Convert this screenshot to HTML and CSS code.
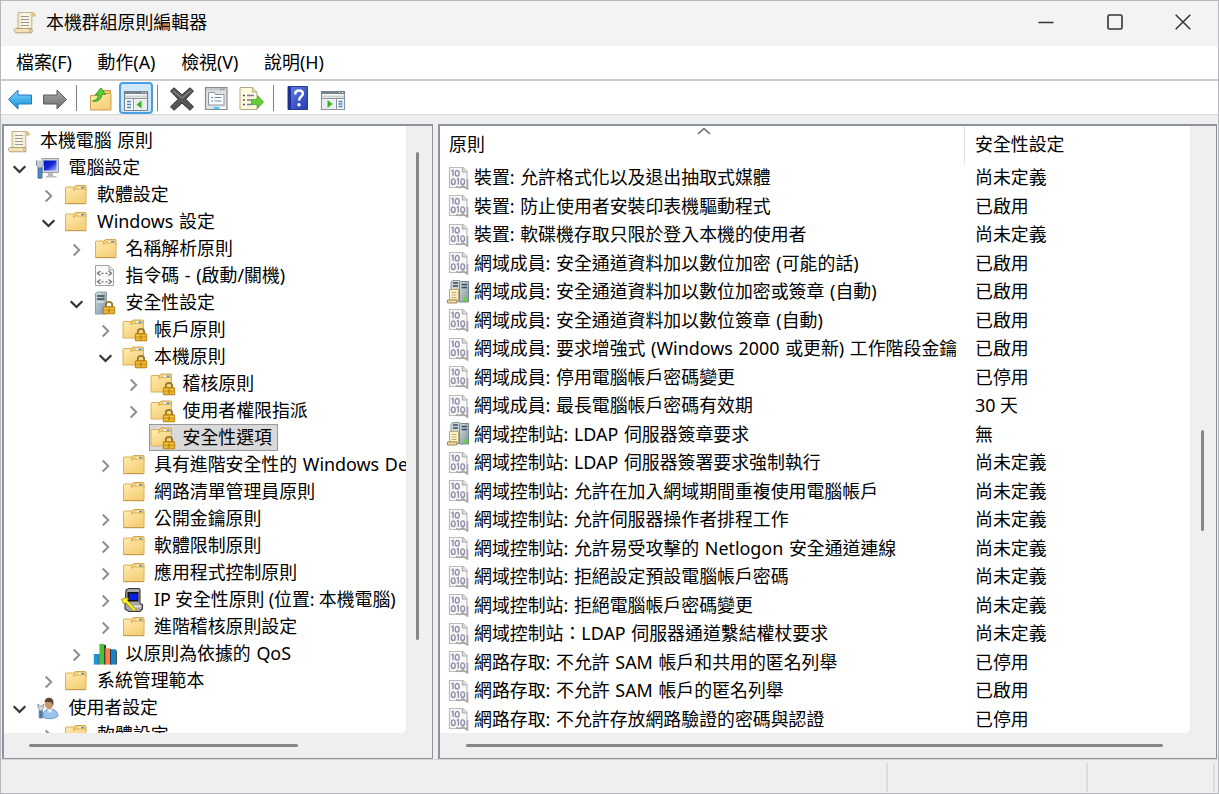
FILE: index.html
```html
<!DOCTYPE html>
<html lang="zh-Hant">
<head>
    <meta charset="UTF-8">
    <meta name="viewport" content="width=device-width, initial-scale=1.0">
    <title>本機群組原則編輯器</title>
    <link rel="stylesheet" href="styles.css">
</head>
<body>
    <!-- Shared icons -->
    <svg class="icon-defs" aria-hidden="true">
        <defs>
            <linearGradient id="gFolder" x1="0" y1="0" x2="0.6" y2="1">
                <stop offset="0" stop-color="#ffebae"/>
                <stop offset="1" stop-color="#f6cf78"/>
            </linearGradient>
            <linearGradient id="gPaper" x1="0" y1="0" x2="1" y2="0">
                <stop offset="0" stop-color="#efe2bd"/>
                <stop offset="0.4" stop-color="#fffbef"/>
                <stop offset="1" stop-color="#f1e3b8"/>
            </linearGradient>
            <linearGradient id="gBlue" x1="0" y1="0" x2="0" y2="1">
                <stop offset="0" stop-color="#7fd4fa"/>
                <stop offset="1" stop-color="#128fe0"/>
            </linearGradient>
            <linearGradient id="gGray" x1="0" y1="0" x2="0" y2="1">
                <stop offset="0" stop-color="#a9a9a9"/>
                <stop offset="1" stop-color="#6c6c6c"/>
            </linearGradient>
            <linearGradient id="gHelp" x1="0" y1="0" x2="1" y2="1">
                <stop offset="0" stop-color="#6482e6"/>
                <stop offset="1" stop-color="#2438b0"/>
            </linearGradient>
            <linearGradient id="gScreen" x1="0" y1="0" x2="1" y2="1">
                <stop offset="0" stop-color="#0018b8"/>
                <stop offset="0.5" stop-color="#1426d8"/>
                <stop offset="1" stop-color="#a8b8ff"/>
            </linearGradient>
            <linearGradient id="gServer" x1="0" y1="0" x2="1" y2="1">
                <stop offset="0" stop-color="#d3dfe4"/>
                <stop offset="1" stop-color="#7d929e"/>
            </linearGradient>
        </defs>
        <symbol id="scroll" viewBox="0 0 24 24">
            <path d="M6 2.500h14c2.600 0 3.400 1.500 3.200 3.600h-3.400V19H6z" fill="url(#gPaper)" stroke="#c4b58e"/>
            <path d="M20 2.600c-1.400 1-1 2.400-.4 3.500h3.600C23.400 4 22.500 2.500 20 2.600z" fill="#d9c48c"/>
            <path d="M3.800 18.500h14.400c-.8 1.800-.2 3.800 1.200 4.300H4.200c-2.400-.4-2.400-3.900-.4-4.300z" fill="#f3e2b0" stroke="#b3a27a"/>
            <path d="M18.200 18.500c2-.4 2.800 3 1 4.300" fill="none" stroke="#a8956a"/>
            <path d="M9 6.500h8M9 9.500h8M9 12.500h8M9 15.500h8" stroke="#9a9a9a" stroke-width="1.200"/>
        </symbol>
        <symbol id="folder" viewBox="0 0 24 24">
            <path d="M10.500 4.500l2-2h9.500c.6 0 1 .4 1 1V8H10.500z" fill="#f3ce7c" stroke="#d3a750"/>
            <path d="M15.500 4h5.500v1.600h-5.500z" fill="#fff"/>
            <path d="M18 4h3v1.600h-3z" fill="#3e94dc"/>
            <path d="M2.500 5c0-.6.4-1 1-1h7v3.500l2-1.500h9.500c.6 0 1 .4 1 1v13.500H2.500z" fill="url(#gFolder)" stroke="#dbb159"/>
            <path d="M2.500 20.700H23" stroke="#bf9848"/>
        </symbol>
        <symbol id="lock" viewBox="0 0 13 14">
            <path d="M3.300 7V4.500a3.200 3.200 0 0 1 6.400 0V7" fill="none" stroke="#94762e" stroke-width="1.800"/>
            <rect x=".7" y="6.200" width="11.600" height="7.300" rx="1" fill="#e0a51e" stroke="#b17c10"/>
            <path d="M1.500 8h10M1.500 11.500h10" stroke="#f2c64c"/>
            <path d="M6.500 8v4" stroke="#c18a14" stroke-width="2"/>
        </symbol>
        <symbol id="folder-lock" viewBox="0 0 26 24">
            <g transform="translate(-1.500 -.5)">
                <path d="M10.500 4.500l2-2h9.500c.6 0 1 .4 1 1V8H10.500z" fill="#f3ce7c" stroke="#d3a750"/>
                <path d="M15.500 4h5.500v1.600h-5.500z" fill="#fff"/>
                <path d="M18 4h3v1.600h-3z" fill="#3e94dc"/>
                <path d="M2.500 5c0-.6.4-1 1-1h7v3.500l2-1.500h9.500c.6 0 1 .4 1 1v13.500H2.500z" fill="url(#gFolder)" stroke="#dbb159"/>
            </g>
            <use href="#lock" x="12.500" y="9.500" width="13" height="14"/>
        </symbol>
        <symbol id="server-lock" viewBox="0 0 24 24">
            <path d="M2.500 2.500l2-1.500h9l-.5 22H2.500z" fill="url(#gServer)" stroke="#8d9ca5"/>
            <path d="M4 5h7.500M4 8h7.500" stroke="#33454f" stroke-width="1.500"/>
            <path d="M4 11h7.500" stroke="#eef4f7"/>
            <use href="#lock" x="9.500" y="9.500" width="13" height="14"/>
        </symbol>
        <symbol id="computer" viewBox="0 0 24 24">
            <path d="M7 2.500h16.500v14H7z" fill="#d3d7da" stroke="#999fa4"/>
            <path d="M9 4.500h12.500v10H9z" fill="url(#gScreen)"/>
            <path d="M13 17h5v3h3.500v1.500H11V20h2z" fill="#b9bdc0"/>
            <path d="M1.500 4.500v4.500c0 1 1 1.500 1.700 2V22h3.600V11c1-.5 1.700-1 1.700-2V4.500" fill="#c0ccd4" stroke="#7f909b"/>
            <path d="M3.200 12h3.600v10H3.200z" fill="#4f8fc8" stroke="#2e6394" stroke-width=".8"/>
        </symbol>
        <symbol id="user" viewBox="0 0 24 24">
            <path d="M8 21c-.3-4.600 2.500-8 7-8s8 3 8 7c-3 3.300-12 3.500-15 1z" fill="#9cc4ea" stroke="#6a98c6"/>
            <path d="M12 13.500l3 3.500 2.500-3.500z" fill="#fff"/>
            <ellipse cx="14" cy="7.800" rx="4.300" ry="5.300" fill="#c99a72"/>
            <path d="M9.600 6C10 2.500 12 1.500 14.500 1.800c3.500.4 4.700 3.500 3.500 8l-1.600-3.600z" fill="#5d4536"/>
            <path d="M3 8v3.500c0 1 .6 1.300 1.200 1.800V22h3.200v-8.700c.8-.5 1.200-.8 1.200-1.800V8L7 10H4.700z" fill="#d1d9df" stroke="#84939e" stroke-width=".9"/>
            <path d="M4.200 14.500h3.200V22H4.200z" fill="#3f7cb6"/>
        </symbol>
        <symbol id="script" viewBox="0 0 24 24">
            <path d="M2.500 1.500H16l4.500 4.500v15.500h-18z" fill="#fafafa" stroke="#a3a3a3"/>
            <path d="M16 1.500V6h4.500" fill="#e4e4e4" stroke="#a3a3a3"/>
            <path d="M7.500 7L4.500 9.300l3 2.200M15.500 7l3 2.300-3 2.200M8.500 9.300h2M12.500 9.300h2M7.500 15.500l-3 2.300 3 2.200M15.500 15.500l3 2.300-3 2.200M8.500 17.800h2M12.500 17.800h2" fill="none" stroke="#6d6d7c" stroke-width="1.300"/>
        </symbol>
        <symbol id="ipsec" viewBox="0 0 24 24">
            <path d="M5 2l3-1.500h10l1 1.500v13.500l2.500 1v4.500L19 23.500H8L4 21v-4z" fill="#a9a9ad" stroke="#333" stroke-width="1.100"/>
            <path d="M6.500 4h11v9.500h-11z" fill="#111"/>
            <path d="M8 5.500h8.500V12H8z" fill="#0a1ee6"/>
            <path d="M10 18.500h10" stroke="#eee" stroke-width="1.500"/>
            <path d="M.5 11.500L5 9.500l2.500 1-1 2 3 3 5.500 6-2 2-8-8.500-2.500.5z" fill="#fff01a" stroke="#857700" stroke-width=".7"/>
        </symbol>
        <symbol id="qos" viewBox="0 0 25 24">
            <path d="M5.500 12.500l1.500-1V23H5.500zM11.500 2l2 1V23h-2zM17.500 6.500l2 1V23h-2zM23.300 7.500l1.500 1V23h-1.500z" fill="#1c2a22"/>
            <path d="M.8 12h5V23h-5z" fill="#1e93d8"/>
            <path d="M6.700 1.500h5V23h-5z" fill="#4fbd3e"/>
            <path d="M12.800 6h5v17h-5z" fill="#ff7a4d"/>
            <path d="M18.600 7h5v16h-5z" fill="#1583cf"/>
        </symbol>
        <symbol id="policy" viewBox="0 0 22 24">
            <path d="M1.500 1.500h13.500l4 4v16h-17.500z" fill="#f8f8f8" stroke="#bcbcbc" stroke-width="1.200"/>
            <path d="M14.500 1.500v4.500H19" fill="#e6e6e6" stroke="#a8a8a8" stroke-width="1.200"/>
            <g fill="none" stroke="#9290aa" stroke-width="1.400">
                <path d="M3.500 5l1.500-.7v6"/>
                <ellipse cx="9.200" cy="7.300" rx="2" ry="2.800"/>
                <ellipse cx="5.300" cy="15.700" rx="1.900" ry="2.800"/>
                <path d="M8.800 13.400l1.500-.7v6"/>
                <ellipse cx="14.700" cy="15.700" rx="1.900" ry="2.800"/>
            </g>
            <path d="M8 20.500c2.500 1.500 5 1 7-.5l4.500 3V13" fill="none" stroke="#a5a5a5" stroke-width="1.600"/>
        </symbol>
        <symbol id="policy-set" viewBox="0 0 24 24">
            <path d="M4 2l1.500-1.500H13v21H4z" fill="#c8d4d8" stroke="#8b9aa0"/>
            <path d="M12.500 3L14 1.500h7.500V22h-9z" fill="url(#gServer)" stroke="#74868e"/>
            <path d="M6 3h5M6 6h5M14.500 4.500H20M14.500 7.500H20" stroke="#3c4b52" stroke-width="1.300"/>
            <path d="M2.500 9.500h9V20h-9z" fill="#fff3c8" stroke="#bba76f"/>
            <path d="M.5 20h9.500v3H.5z" fill="#efdca0" stroke="#a18c56"/>
            <path d="M4.500 12.500h5M4.500 15h5M4.500 17.500h5" stroke="#b5a983"/>
            <path d="M17.500 17.500H21v4h-3.500z" fill="#5fdc1e"/>
        </symbol>
        <symbol id="chev-right" viewBox="0 0 16 16">
            <path d="M4.700 2.500l5.500 5.500-5.500 5.500" fill="none" stroke="#8f8f8f" stroke-width="2"/>
        </symbol>
        <symbol id="chev-down" viewBox="0 0 16 16">
            <path d="M1.700 5.200L7.500 11l5.800-5.800" fill="none" stroke="#333" stroke-width="2.200"/>
        </symbol>
    </svg>

    <div class="window">
        <header class="titlebar">
            <svg class="title-icon"><use href="#scroll"/></svg>
            <h1>本機群組原則編輯器</h1>
            <div class="controls">
                <svg viewBox="0 0 16 16"><path d="M0.500 8.500h15" stroke="#333" stroke-width="1.500"/></svg>
                <svg viewBox="0 0 16 16"><rect x="1" y="1" width="14" height="14" rx="1.500" fill="none" stroke="#333" stroke-width="1.600"/></svg>
                <svg viewBox="0 0 16 16"><path d="M.7.700l14.600 14.600M15.300.700L.7 15.300" stroke="#333" stroke-width="1.500"/></svg>
            </div>
        </header>

        <nav class="menubar">
            <span>檔案(F)</span>
            <span>動作(A)</span>
            <span>檢視(V)</span>
            <span>說明(H)</span>
        </nav>

        <div class="toolbar">
            <button title="上一頁"><svg viewBox="0 0 26 26"><path d="M1.500 13.500L11 4v5h13.500v9H11v5z" fill="url(#gBlue)" stroke="#2878b8" stroke-linejoin="round"/></svg></button>
            <button title="下一頁"><svg viewBox="0 0 26 26"><path d="M24.500 13.500L15 4v5H1.500v9H15v5z" fill="url(#gGray)" stroke="#5d5d5d" stroke-linejoin="round"/></svg></button>
            <i class="sep"></i>
            <button title="上移一層"><svg viewBox="0 0 26 26">
                <path d="M13 7l2-2.500h7.500V10H13z" fill="#f0c870" stroke="#c89b45"/>
                <path d="M2.500 9.500h10l2-2h8.500v16.500H2.500z" fill="url(#gFolder)" stroke="#c99e4a"/>
                <path d="M4.500 15c4-.5 5.500-3 6-6.500L7 9l6-7 4.500 6.500-3.500-.4c-.5 5-4 8.400-9.500 6.900z" fill="#5ccf35" stroke="#2f9a1c" stroke-width=".9"/>
            </svg></button>
            <button class="active" title="顯示樹狀目錄"><svg viewBox="0 0 26 26">
                <path d="M1.500 5.500h23v19h-23z" fill="#f7f9fa" stroke="#7a858d" stroke-width="1.200"/>
                <path d="M1 5h24v3H1z" fill="#76838c"/>
                <path d="M2 9.500h22v2H2z" fill="#c9d0d4"/>
                <path d="M2 12.500h22M10.500 12.500V24" stroke="#8a959c"/>
                <path d="M4 15.500h4M4 18.500h4M4 21.500h4" stroke="#4b82bd" stroke-width="1.400"/>
                <path d="M12 13.500h11V24H12z" fill="#e9edf0"/>
                <path d="M18.500 14.500v8L13.500 18.500z" fill="#39b51f"/>
                <path d="M19 6.500h1M22 6.500h1" stroke="#fff"/>
            </svg></button>
            <i class="sep"></i>
            <button title="刪除"><svg viewBox="0 0 26 26"><path d="M1.500 5L5 1.800l8 7 8-7L24.500 5l-7.700 8.200 7.700 7.600-3.500 3.500-8-7.200-8 7.200-3.500-3.500 7.700-7.600z" fill="#565656" stroke="#333"/><path d="M4 4.800l9 7.200 9-7.200" fill="none" stroke="#888" stroke-width="1.200"/></svg></button>
            <button title="內容"><svg viewBox="0 0 26 26">
                <path d="M1.500 1.500h21.500v22H1.500z" fill="#dfe2e5" stroke="#858b92" stroke-width="1.200"/>
                <path d="M2 2h20.500v2.500H2z" fill="#c5c9ce"/>
                <path d="M16 3.300h1.500M19 3.300h1.500" stroke="#666"/>
                <path d="M4.500 6.500h6l1 2h8.500V19H4.500z" fill="#fff" stroke="#8d949d"/>
                <path d="M7 11.500h2M7 15h2M10.500 11.500h7M10.500 15h7" stroke="#6b8bb4"/>
                <path d="M10 21h5v2h-5z" fill="#45c9f5"/>
                <path d="M16.500 21h5v2h-5z" fill="#fff"/>
            </svg></button>
            <button title="匯出清單"><svg viewBox="0 0 26 26">
                <path d="M1 1.500h12.500L18 6v17.500H1z" fill="#fff8dc" stroke="#b5aa84"/>
                <path d="M13.500 1.500V6H18" fill="#eadfb6" stroke="#b5aa84"/>
                <path d="M4 9.500h2M4 14h2M4 18.500h2" stroke="#555" stroke-width="1.600"/>
                <path d="M8 9.500h7M8 14h5M8 18.500h5" stroke="#7b74a0" stroke-width="1.300"/>
                <path d="M12.500 13.500h6v-4l6 6.500-6 6.500v-4h-6z" fill="#63cf35" stroke="#4ba82e" stroke-width=".8"/>
            </svg></button>
            <i class="sep"></i>
            <button title="說明"><svg viewBox="0 0 26 26">
                <path d="M3 .5h19.500v23H3z" fill="url(#gHelp)" stroke="#2a3a98"/>
                <path d="M3 1h3v22H3z" fill="#1e2f94"/>
                <path d="M10.200 8.500c0-5.500 8-5 7.600-.7-.3 3-3.800 3-3.800 6.700" fill="none" stroke="#fff" stroke-width="2.500"/>
                <circle cx="14" cy="18.700" r="1.700" fill="#fff"/>
            </svg></button>
            <button title="顯示動作窗格"><svg viewBox="0 0 26 26">
                <path d="M1.500 5.500h23v18h-23z" fill="#f7f9fa" stroke="#8a949b" stroke-width="1.200"/>
                <path d="M1 5h24v3H1z" fill="#76838c"/>
                <path d="M2 9.500h22v2H2z" fill="#c9d0d4"/>
                <path d="M2 12.500h22M16.500 12.500V23" stroke="#8a959c"/>
                <path d="M18.500 15.500h4M18.500 18h4M18.500 20.500h4" stroke="#4b82bd" stroke-width="1.400"/>
                <path d="M3 13.500h12V23H3z" fill="#e9edf0"/>
                <path d="M7.500 14v8l5-4z" fill="#39b51f"/>
                <path d="M19 6.500h1M22 6.500h1" stroke="#fff"/>
            </svg></button>
        </div>

        <main class="panes">
            <section class="pane tree-pane">
                <ul class="tree">
                    <li class="root"><div class="node"><svg><use href="#scroll"/></svg>本機電腦 原則</div></li>
                    <li class="l1"><svg class="chev"><use href="#chev-down"/></svg><div class="node"><svg><use href="#computer"/></svg>電腦設定</div></li>
                    <li class="l2"><svg class="chev"><use href="#chev-right"/></svg><div class="node"><svg><use href="#folder"/></svg>軟體設定</div></li>
                    <li class="l2"><svg class="chev"><use href="#chev-down"/></svg><div class="node"><svg><use href="#folder"/></svg>Windows 設定</div></li>
                    <li class="l3"><svg class="chev"><use href="#chev-right"/></svg><div class="node"><svg><use href="#folder"/></svg>名稱解析原則</div></li>
                    <li class="l3"><svg class="chev"></svg><div class="node"><svg><use href="#script"/></svg>指令碼 - (啟動/關機)</div></li>
                    <li class="l3"><svg class="chev"><use href="#chev-down"/></svg><div class="node"><svg><use href="#server-lock"/></svg>安全性設定</div></li>
                    <li class="l4"><svg class="chev"><use href="#chev-right"/></svg><div class="node"><svg class="wide"><use href="#folder-lock"/></svg>帳戶原則</div></li>
                    <li class="l4"><svg class="chev"><use href="#chev-down"/></svg><div class="node"><svg class="wide"><use href="#folder-lock"/></svg>本機原則</div></li>
                    <li class="l5"><svg class="chev"><use href="#chev-right"/></svg><div class="node"><svg class="wide"><use href="#folder-lock"/></svg>稽核原則</div></li>
                    <li class="l5"><svg class="chev"><use href="#chev-right"/></svg><div class="node"><svg class="wide"><use href="#folder-lock"/></svg>使用者權限指派</div></li>
                    <li class="l5"><svg class="chev"></svg><div class="node selected"><svg class="wide"><use href="#folder-lock"/></svg>安全性選項</div></li>
                    <li class="l4"><svg class="chev"><use href="#chev-right"/></svg><div class="node"><svg><use href="#folder"/></svg>具有進階安全性的 Windows De</div></li>
                    <li class="l4"><svg class="chev"></svg><div class="node"><svg><use href="#folder"/></svg>網路清單管理員原則</div></li>
                    <li class="l4"><svg class="chev"><use href="#chev-right"/></svg><div class="node"><svg><use href="#folder"/></svg>公開金鑰原則</div></li>
                    <li class="l4"><svg class="chev"><use href="#chev-right"/></svg><div class="node"><svg><use href="#folder"/></svg>軟體限制原則</div></li>
                    <li class="l4"><svg class="chev"><use href="#chev-right"/></svg><div class="node"><svg><use href="#folder"/></svg>應用程式控制原則</div></li>
                    <li class="l4"><svg class="chev"><use href="#chev-right"/></svg><div class="node tight"><svg><use href="#ipsec"/></svg>IP 安全性原則 (位置: 本機電腦)</div></li>
                    <li class="l4"><svg class="chev"><use href="#chev-right"/></svg><div class="node"><svg><use href="#folder"/></svg>進階稽核原則設定</div></li>
                    <li class="l3"><svg class="chev"><use href="#chev-right"/></svg><div class="node"><svg><use href="#qos"/></svg>以原則為依據的 QoS</div></li>
                    <li class="l2"><svg class="chev"><use href="#chev-right"/></svg><div class="node"><svg><use href="#folder"/></svg>系統管理範本</div></li>
                    <li class="l1"><svg class="chev"><use href="#chev-down"/></svg><div class="node"><svg><use href="#user"/></svg>使用者設定</div></li>
                    <li class="l2"><svg class="chev"><use href="#chev-right"/></svg><div class="node"><svg><use href="#folder"/></svg>軟體設定</div></li>
                </ul>
                <div class="vscroll"><i></i></div>
                <div class="hscroll"><i></i></div>
            </section>

            <section class="pane list-pane">
                <div class="list">
                    <div class="list-head">
                        <div class="name">原則<svg class="sort" viewBox="0 0 14 8"><path d="M1 7l6-5.500L13 7" fill="none" stroke="#666" stroke-width="1.500"/></svg></div>
                        <div class="value">安全性設定</div>
                    </div>
                    <ul class="rows">
                        <li><svg><use href="#policy"/></svg><span class="name">裝置: 允許格式化以及退出抽取式媒體</span><span class="value">尚未定義</span></li>
                        <li><svg><use href="#policy"/></svg><span class="name">裝置: 防止使用者安裝印表機驅動程式</span><span class="value">已啟用</span></li>
                        <li><svg><use href="#policy"/></svg><span class="name">裝置: 軟碟機存取只限於登入本機的使用者</span><span class="value">尚未定義</span></li>
                        <li><svg><use href="#policy"/></svg><span class="name">網域成員: 安全通道資料加以數位加密 (可能的話)</span><span class="value">已啟用</span></li>
                        <li><svg><use href="#policy-set"/></svg><span class="name">網域成員: 安全通道資料加以數位加密或簽章 (自動)</span><span class="value">已啟用</span></li>
                        <li><svg><use href="#policy"/></svg><span class="name">網域成員: 安全通道資料加以數位簽章 (自動)</span><span class="value">已啟用</span></li>
                        <li><svg><use href="#policy"/></svg><span class="name">網域成員: 要求增強式 (Windows 2000 或更新) 工作階段金鑰</span><span class="value">已啟用</span></li>
                        <li><svg><use href="#policy"/></svg><span class="name">網域成員: 停用電腦帳戶密碼變更</span><span class="value">已停用</span></li>
                        <li><svg><use href="#policy"/></svg><span class="name">網域成員: 最長電腦帳戶密碼有效期</span><span class="value">30 天</span></li>
                        <li><svg><use href="#policy-set"/></svg><span class="name">網域控制站: LDAP 伺服器簽章要求</span><span class="value">無</span></li>
                        <li><svg><use href="#policy"/></svg><span class="name">網域控制站: LDAP 伺服器簽署要求強制執行</span><span class="value">尚未定義</span></li>
                        <li><svg><use href="#policy"/></svg><span class="name">網域控制站: 允許在加入網域期間重複使用電腦帳戶</span><span class="value">尚未定義</span></li>
                        <li><svg><use href="#policy"/></svg><span class="name">網域控制站: 允許伺服器操作者排程工作</span><span class="value">尚未定義</span></li>
                        <li><svg><use href="#policy"/></svg><span class="name">網域控制站: 允許易受攻擊的 Netlogon 安全通道連線</span><span class="value">尚未定義</span></li>
                        <li><svg><use href="#policy"/></svg><span class="name">網域控制站: 拒絕設定預設電腦帳戶密碼</span><span class="value">尚未定義</span></li>
                        <li><svg><use href="#policy"/></svg><span class="name">網域控制站: 拒絕電腦帳戶密碼變更</span><span class="value">尚未定義</span></li>
                        <li><svg><use href="#policy"/></svg><span class="name">網域控制站：LDAP 伺服器通道繫結權杖要求</span><span class="value">尚未定義</span></li>
                        <li><svg><use href="#policy"/></svg><span class="name">網路存取: 不允許 SAM 帳戶和共用的匿名列舉</span><span class="value">已停用</span></li>
                        <li><svg><use href="#policy"/></svg><span class="name">網路存取: 不允許 SAM 帳戶的匿名列舉</span><span class="value">已啟用</span></li>
                        <li><svg><use href="#policy"/></svg><span class="name">網路存取: 不允許存放網路驗證的密碼與認證</span><span class="value">已停用</span></li>
                    </ul>
                </div>
                <div class="vscroll"><i></i></div>
                <div class="hscroll"><i></i></div>
            </section>
        </main>

        <footer class="statusbar">
            <div></div>
            <div></div>
            <div></div>
        </footer>
    </div>
</body>
</html>
```

FILE: styles.css
```css
:root {
    --face: #efefef;
    --pane-border: #8f949c;
    --thumb: #868686;
    --text: #000;
}

* {
    box-sizing: border-box;
}

body {
    margin: 0;
    font-family: "Noto Sans", "Noto Sans CJK TC", sans-serif;
    font-size: 17.9px;
    line-height: 27px;
    color: var(--text);
    overflow: hidden;
}

ul {
    list-style: none;
    margin: 0;
    padding: 0;
}

svg {
    display: block;
    flex: none;
}

.icon-defs {
    position: absolute;
    width: 0;
    height: 0;
}

.window {
    width: 1219px;
    height: 794px;
    display: flex;
    flex-direction: column;
    background: var(--face);
    border: 1px solid #b4b8bc;
}

/* Title bar */
.titlebar {
    height: 45px;
    display: flex;
    align-items: center;
    padding: 0 27px 3px 11px;
    background: #f3f3f3;
}

.title-icon {
    width: 24px;
    height: 24px;
}

h1 {
    margin: 0 0 0 10px;
    font-size: 17.9px;
    font-weight: 400;
}

.controls {
    display: flex;
    gap: 52.5px;
    margin-left: auto;
}

.controls svg {
    width: 16px;
    height: 16px;
}

/* Menu */
.menubar {
    height: 33px;
    display: flex;
    align-items: center;
    gap: 25.7px;
    padding-left: 15px;
    background: #fff;
}

/* Toolbar */
.toolbar {
    height: 36px;
    display: flex;
    align-items: center;
    gap: 1px;
    padding-left: 2px;
    background: #fff;
    border-top: 2px solid #c9cacc;
    border-bottom: 1px solid #d9d9d9;
}

.toolbar button {
    width: 34px;
    height: 32px;
    padding: 2px 0 0;
    display: flex;
    align-items: center;
    justify-content: center;
    background: none;
    border: 2px solid transparent;
    border-radius: 4px;
}

.toolbar button.active {
    background: #cfe8fc;
    border-color: #4a9fe0;
}

.toolbar svg {
    width: 26px;
    height: 26px;
}

.sep {
    width: 1px;
    height: 26px;
    margin: 1px 6px 0 3px;
    background: #808080;
}

/* Panes */
.panes {
    height: 635px;
    margin-top: 9px;
    padding-left: 1px;
    display: flex;
    gap: 5px;
}

.pane {
    display: grid;
    grid-template-rows: 607px 1fr;
    border: 2px solid var(--pane-border);
    border-width: 2px 1px 1px 2px;
}

.tree-pane {
    width: 431px;
    grid-template-columns: 402px 1fr;
}

.list-pane {
    width: 779px;
    grid-template-columns: 750px 1fr;
}

.tree,
.list {
    overflow: hidden;
    background: #fff;
    border-bottom-right-radius: 5px;
}

.tree {
    padding-top: 1px;
}

.vscroll i,
.hscroll i {
    display: block;
    background: var(--thumb);
    border-radius: 2px;
}

.vscroll i {
    width: 3px;
}

.hscroll {
    grid-column: 1 / -1;
}

.hscroll i {
    height: 3px;
}

.tree-pane .vscroll i {
    height: 488px;
    margin: 26px 0 0 10px;
}

.tree-pane .hscroll i {
    width: 269px;
    margin: 11px 0 0 25px;
}

.list-pane .vscroll i {
    height: 101px;
    margin: 304px 0 0 11px;
}

.list-pane .hscroll i {
    width: 697px;
    margin: 11px 0 0 26px;
}

/* Tree */
.tree li {
    height: 27px;
    display: flex;
    align-items: center;
    white-space: nowrap;
}

.tree .root,
.tree .l1 { padding-left: 2px; }
.tree .l2 { padding-left: 30.5px; }
.tree .l3 { padding-left: 59px; }
.tree .l4 { padding-left: 87.5px; }
.tree .l5 { padding-left: 116px; }

.chev {
    width: 16px;
    height: 16px;
    margin: 2px 6.5px 0 6px;
}

.node {
    height: 27px;
    display: flex;
    align-items: center;
    padding-right: 6px;
    word-spacing: 1px;
}

.node.tight {
    word-spacing: -0.5px;
}

.node svg {
    width: 24px;
    height: 24px;
    margin-right: 10px;
}

.l3 .node svg,
.l4 .node svg {
    margin: 0 9px 0 1px;
}

.node svg.wide {
    width: 26px;
    margin: 1px 6.5px 0 1.5px;
}

.node.selected {
    background: #d9d9d9;
    box-shadow: inset 0 0 0 1px #999;
}

/* Policy list */
.list-head {
    height: 37.5px;
    display: flex;
    line-height: 36px;
}

.list-head .name {
    position: relative;
    width: 525px;
    padding-left: 9px;
    border-right: 1px solid #e3e3e3;
}

.list-head .value {
    padding-left: 10px;
}

.sort {
    position: absolute;
    top: 1px;
    left: 257px;
    width: 14px;
    height: 8px;
}

.rows li {
    height: 28.5px;
    display: flex;
    align-items: center;
    padding-left: 7px;
    white-space: nowrap;
}

.rows svg {
    width: 24px;
    height: 24px;
    margin-right: 3px;
}

.rows .name {
    width: 501px;
    word-spacing: 1px;
}

/* Status bar */
.statusbar {
    flex: 1;
    display: flex;
    padding: 3px 3px 1px 0;
    border-top: 1px solid #d4d4d4;
}

.statusbar div {
    border-right: 2px solid #dcdcdc;
}

.statusbar div:nth-child(1) { width: 887px; }
.statusbar div:nth-child(2) { width: 200px; }
.statusbar div:nth-child(3) { flex: 1; }
```
